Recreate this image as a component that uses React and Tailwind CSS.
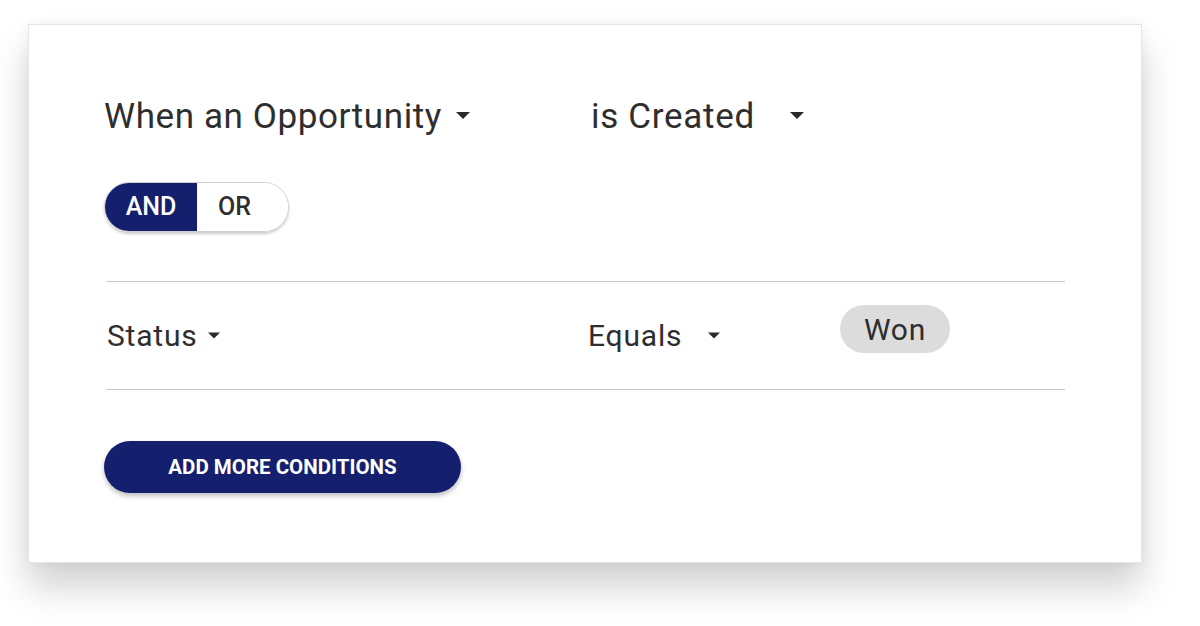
export default function App() {
  const Caret = ({ className = "" }) => (
    <svg width="14" height="8" viewBox="0 0 14 8" className={className}>
      <path d="M0 0 L14 0 L7 7 Z" fill="#2a2a2a" />
    </svg>
  );
  return (
    <div className="w-[1200px] h-[626px] bg-white relative overflow-hidden" style={{ fontFamily: "Roboto, 'Liberation Sans', sans-serif" }}>
      <div className="absolute left-[28px] top-[24px] w-[1114px] h-[539px] bg-white border border-[#e6e6e6] shadow-[0_24px_34px_rgba(0,0,0,0.18),0_0_12px_rgba(0,0,0,0.05)]">
        <div className="pl-[75px] pr-[76px] pt-[66px] text-[#2e2e2e]">
          <div className="flex items-center h-[50px]">
            <div className="w-[487px] flex items-center">
              <span className="text-[35px] leading-none tracking-[0.6px]">When an Opportunity</span>
              <Caret className="ml-[14px]" />
            </div>
            <div className="flex items-center">
              <span className="text-[35px] leading-none tracking-[0.7px]">is Created</span>
              <Caret className="ml-[35px]" />
            </div>
          </div>
          <div className="mt-[41px] flex w-[185px] h-[50px] rounded-full overflow-hidden border border-[#d0d0d0] shadow-[0_2px_3px_rgba(0,0,0,0.2)]">
            <div className="w-[92px] bg-[#141f6e] text-white flex items-center justify-center text-[25px] font-medium">AND</div>
            <div className="flex-1 bg-white text-[#2e2e2e] flex items-center pl-[21px] text-[25px] font-medium">OR</div>
          </div>
          <div className="mt-[49px] ml-[2px] w-[959px] border-t border-[#c8c8c8]">
            <div className="flex items-center h-[107px]">
              <div className="w-[482px] pl-[1px] flex items-center">
                <span className="text-[30px] leading-none tracking-[0.8px]">Status</span>
                <Caret className="ml-[10px] w-[12px]" />
              </div>
              <div className="w-[252px] flex items-center">
                <span className="text-[30px] leading-none tracking-[0.8px]">Equals</span>
                <Caret className="ml-[26px] w-[12px]" />
              </div>
              <div className="-mt-[13px] h-[48px] w-[110px] rounded-full bg-[#dcdcdc] flex items-center justify-center text-[30px] tracking-[0.8px]">Won</div>
            </div>
          </div>
          <div className="ml-[2px] w-[959px] border-t border-[#c8c8c8]"></div>
          <button className="mt-[51px] w-[357px] h-[52px] rounded-full bg-[#141f6e] text-white font-bold text-[20.5px] shadow-[0_3px_5px_rgba(0,0,0,0.25)]">ADD MORE CONDITIONS</button>
        </div>
      </div>
    </div>
  );
}
